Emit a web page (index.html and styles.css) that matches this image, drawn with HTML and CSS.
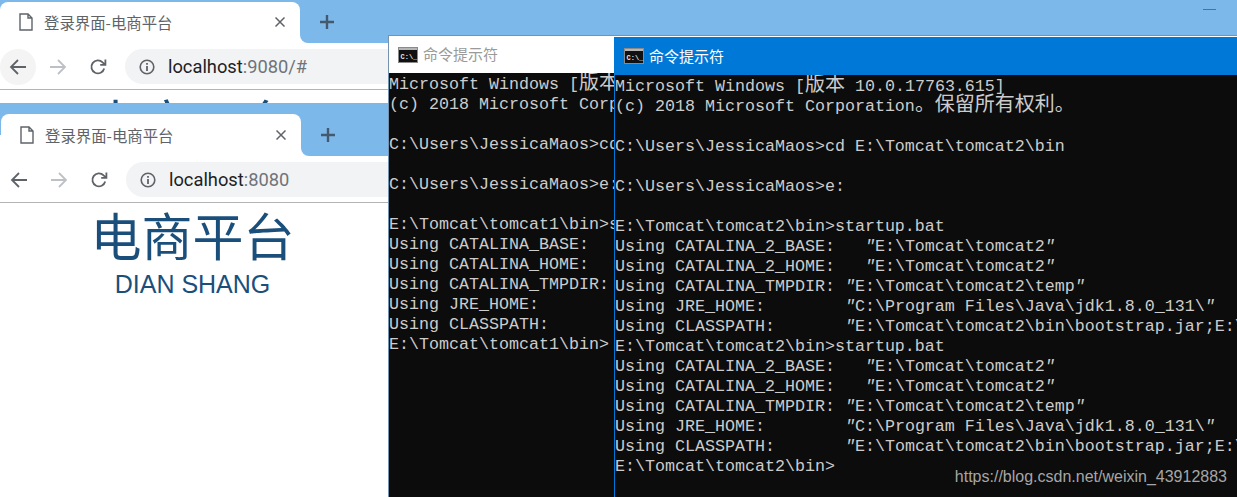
FILE: index.html
```html
<!DOCTYPE html>
<html lang="zh">
<head>
<meta charset="utf-8">
<title>命令提示符</title>
<link rel="stylesheet" href="styles.css">
</head>
<body>
<div class="desktop">
  <section class="browser browser-back">
    <div class="strip">
      <div class="tab">
        <svg class="doc" viewBox="0 0 14 18"><path d="M1 1h8l4 4v12H1z M9 1v4h4" fill="none" stroke="#5f6368" stroke-width="1.4"/></svg>
        <span class="tab-title">登录界面-电商平台</span>
        <svg class="close" viewBox="0 0 10 10"><path d="M0.5 0.5l9 9M9.5 0.5l-9 9" stroke="#5f6368" stroke-width="1.5"/></svg>
      </div>
      <div class="newtab">
        <svg class="plus" viewBox="0 0 14 14"><path d="M7 0v14M0 7h14" stroke="#45596e" stroke-width="2.4"/></svg>
      </div>
    </div>
    <div class="toolbar">
      <span class="nav nav-hover"><svg viewBox="0 0 18 18"><path d="M17 9H2M9 2L2 9l7 7" fill="none" stroke="#5f6368" stroke-width="1.8"/></svg></span>
      <span class="nav"><svg viewBox="0 0 18 18"><path d="M1 9h15M9 2l7 7-7 7" fill="none" stroke="#bdc1c6" stroke-width="1.8"/></svg></span>
      <span class="nav"><svg viewBox="0 0 18 18"><path d="M15.2 10.5A6.5 6.5 0 1 1 13.6 4.4L16 6.6M16.4 1.6v5.2h-5.2" fill="none" stroke="#5f6368" stroke-width="1.8"/></svg></span>
      <div class="omnibox">
        <svg class="info" viewBox="0 0 16 16"><circle cx="8" cy="8" r="6.8" fill="none" stroke="#5f6368" stroke-width="1.6"/><path d="M8 7v5M8 4v1.8" stroke="#5f6368" stroke-width="1.8"/></svg>
        <span class="url">localhost<span class="url-rest">:9080/#</span></span>
      </div>
    </div>
    <div class="page page-clipped">
      <h1 class="brand">电商平台</h1>
    </div>
  </section>

  <section class="browser browser-front">
    <div class="strip">
      <div class="tab">
        <svg class="doc" viewBox="0 0 14 18"><path d="M1 1h8l4 4v12H1z M9 1v4h4" fill="none" stroke="#5f6368" stroke-width="1.4"/></svg>
        <span class="tab-title">登录界面-电商平台</span>
        <svg class="close" viewBox="0 0 10 10"><path d="M0.5 0.5l9 9M9.5 0.5l-9 9" stroke="#5f6368" stroke-width="1.5"/></svg>
      </div>
      <div class="newtab">
        <svg class="plus" viewBox="0 0 14 14"><path d="M7 0v14M0 7h14" stroke="#45596e" stroke-width="2.4"/></svg>
      </div>
    </div>
    <div class="toolbar">
      <span class="nav"><svg viewBox="0 0 18 18"><path d="M17 9H2M9 2L2 9l7 7" fill="none" stroke="#5f6368" stroke-width="1.8"/></svg></span>
      <span class="nav"><svg viewBox="0 0 18 18"><path d="M1 9h15M9 2l7 7-7 7" fill="none" stroke="#bdc1c6" stroke-width="1.8"/></svg></span>
      <span class="nav"><svg viewBox="0 0 18 18"><path d="M15.2 10.5A6.5 6.5 0 1 1 13.6 4.4L16 6.6M16.4 1.6v5.2h-5.2" fill="none" stroke="#5f6368" stroke-width="1.8"/></svg></span>
      <div class="omnibox">
        <svg class="info" viewBox="0 0 16 16"><circle cx="8" cy="8" r="6.8" fill="none" stroke="#5f6368" stroke-width="1.6"/><path d="M8 7v5M8 4v1.8" stroke="#5f6368" stroke-width="1.8"/></svg>
        <span class="url">localhost<span class="url-rest">:8080</span></span>
      </div>
    </div>
    <div class="page">
      <h1 class="brand">电商平台</h1>
      <p class="brand-sub">DIAN SHANG</p>
    </div>
  </section>

  <div class="minimize"></div>

  <section class="console console-back">
    <header class="console-title">
      <svg class="cmd-icon" viewBox="0 0 20 16"><rect x="0.5" y="0.5" width="19" height="15" fill="#111" stroke="#8a8a8a"/><rect x="1" y="1" width="18" height="2" fill="#b5b5b5"/><text x="2.5" y="12" class="cmd-glyph">C:\_</text></svg>
      <span class="console-label">命令提示符</span>
    </header>
<pre class="console-body">Microsoft Windows [<span class="cjk">版本</span> 10.0.17763.615]
(c) 2018 Microsoft Corporation

C:\Users\JessicaMaos&gt;cd E:\Tomcat\tomcat1\bin

C:\Users\JessicaMaos&gt;e:

E:\Tomcat\tomcat1\bin&gt;startup.bat
Using CATALINA_BASE:
Using CATALINA_HOME:
Using CATALINA_TMPDIR:
Using JRE_HOME:
Using CLASSPATH:
E:\Tomcat\tomcat1\bin&gt;</pre>
  </section>

  <section class="console console-front">
    <header class="console-title">
      <svg class="cmd-icon" viewBox="0 0 20 16"><rect x="0.5" y="0.5" width="19" height="15" fill="#111" stroke="#8a8a8a"/><rect x="1" y="1" width="18" height="2" fill="#b5b5b5"/><text x="2.5" y="12" class="cmd-glyph">C:\_</text></svg>
      <span class="console-label">命令提示符</span>
    </header>
<pre class="console-body">Microsoft Windows [<span class="cjk">版本</span> 10.0.17763.615]
(c) 2018 Microsoft Corporation<span class="cjk">。保留所有权利。</span>

C:\Users\JessicaMaos&gt;cd E:\Tomcat\tomcat2\bin

C:\Users\JessicaMaos&gt;e:

E:\Tomcat\tomcat2\bin&gt;startup.bat
Using CATALINA_2_BASE:   <i>"</i>E:\Tomcat\tomcat2<i>"</i>
Using CATALINA_2_HOME:   <i>"</i>E:\Tomcat\tomcat2<i>"</i>
Using CATALINA_TMPDIR: <i>"</i>E:\Tomcat\tomcat2\temp<i>"</i>
Using JRE_HOME:        <i>"</i>C:\Program Files\Java\jdk1.8.0_131\<i>"</i>
Using CLASSPATH:       <i>"</i>E:\Tomcat\tomcat2\bin\bootstrap.jar;E:\Tomcat
E:\Tomcat\tomcat2\bin&gt;startup.bat
Using CATALINA_2_BASE:   <i>"</i>E:\Tomcat\tomcat2<i>"</i>
Using CATALINA_2_HOME:   <i>"</i>E:\Tomcat\tomcat2<i>"</i>
Using CATALINA_TMPDIR: <i>"</i>E:\Tomcat\tomcat2\temp<i>"</i>
Using JRE_HOME:        <i>"</i>C:\Program Files\Java\jdk1.8.0_131\<i>"</i>
Using CLASSPATH:       <i>"</i>E:\Tomcat\tomcat2\bin\bootstrap.jar;E:\Tomcat
E:\Tomcat\tomcat2\bin&gt;</pre>
  </section>

  <div class="watermark">https://blog.csdn.net/weixin_43912883</div>
</div>
</body>
</html>
```
FILE: styles.css
```css
* { box-sizing: border-box; }
html, body { margin: 0; padding: 0; background: #7db8ea; }
.desktop {
  position: relative;
  width: 1237px;
  height: 497px;
  overflow: hidden;
  background: #7db8ea;
  font-family: "Noto Sans CJK SC", "Liberation Sans", sans-serif;
}

/* browser windows */
.browser { position: absolute; left: 0; width: 1237px; background: #fff; }
.browser-back { top: 0; height: 103px; padding-top: 2px; overflow: hidden; background: #7db8ea; }
.browser-front { top: 103px; height: 394px; padding-top: 11px; background: #7db8ea; }
.strip {
  display: flex;
  height: 41px;
  background: linear-gradient(#7db8ea 50%, #fff 50%);
}
.browser-front .strip { padding-left: 1px; height: 42px; }
.tab {
  width: 300px;
  display: flex;
  align-items: center;
  padding: 0 15px 1px 19px;
  background: #fff;
  border-radius: 8px 8px 0 0;
}
.doc { width: 14px; height: 18px; flex: none; }
.tab-title { margin-left: 11px; flex: 1; font-size: 15.4px; line-height: 20px; color: #5f6368; white-space: nowrap; }
.close { width: 10px; height: 10px; flex: none; }
.newtab {
  flex: 1;
  display: flex;
  align-items: center;
  padding: 0 0 1px 20px;
  background: #7db8ea;
  border-bottom-left-radius: 8px;
}
.plus { width: 14px; height: 14px; }

.toolbar {
  display: flex;
  align-items: center;
  height: 47px;
  background: #fff;
  border-bottom: 1px solid #b4b4b4;
  padding-top: 1px;
}
.nav {
  width: 36px;
  height: 36px;
  margin-right: 4px;
  display: flex;
  align-items: center;
  justify-content: center;
  border-radius: 50%;
  flex: none;
}
.browser-front .nav { margin-left: 1px; margin-right: 3px; }
.nav svg { width: 18px; height: 18px; }
.nav-hover { background: #f4f4f4; }
.omnibox {
  flex: 1;
  height: 35px;
  margin-left: 5px;
  display: flex;
  align-items: center;
  padding-left: 14px;
  background: #f1f3f4;
  border-radius: 18px;
}
.browser-front .omnibox { margin-left: 6px; }
.info { width: 16px; height: 16px; flex: none; }
.url { margin-left: 13px; font-family: Roboto, "Liberation Sans", sans-serif; font-size: 18.3px; color: #202124; }
.url-rest { color: #6f7479; }

.page { background: #fff; text-align: center; color: #1a4f7c; }
.browser-back .page { height: 13px; overflow: hidden; }
.browser-front .page { height: 294px; }
.brand {
  margin: 0;
  padding-top: 1px;
  width: 385px;
  font-size: 51px;
  line-height: 60px;
  font-weight: 400;
  font-family: "Noto Sans CJK SC", sans-serif;
}
.brand-sub {
  margin: 6px 0 0;
  width: 385px;
  font-family: "Liberation Sans", sans-serif;
  font-size: 25px;
  line-height: 28px;
}

.minimize { position: absolute; left: 1203px; top: 9px; width: 13px; height: 1px; background: #4a7399; }

/* consoles */
.console { position: absolute; display: flex; flex-direction: column; }
.console-back {
  left: 388px; top: 35px; width: 849px; height: 462px;
  border-top: 1px solid #7593ae;
  border-left: 1px solid #7593ae;
  background: #0c0c0c;
}
.console-front {
  left: 614px; top: 37px; width: 623px; height: 460px;
  border-left: 1px solid #0078d7;
  background: #0c0c0c;
}
.console-title {
  display: flex;
  align-items: center;
  flex: none;
  height: 37px;
  padding-left: 9px;
  gap: 5px;
  font-size: 15px;
  background: #fff;
  color: #9a9a9a;
}
.console-front .console-title { height: 38px; background: #0078d7; color: #fff; }
.console-label { margin-top: -2px; }
.cmd-icon { width: 20px; height: 16px; flex: none; }
.cmd-glyph { font-family: "Liberation Mono", monospace; font-size: 7px; font-weight: 700; fill: #e6e6e6; }
.console-body {
  margin: 0;
  padding-top: 2px;
  overflow: hidden;
  color: #cccccc;
  font-family: "Liberation Mono", "Noto Sans CJK SC", monospace;
  font-size: 16.67px;
  line-height: 20px;
  white-space: pre;
}
.cjk { font-family: "Noto Sans CJK SC", sans-serif; font-size: 20px; line-height: 0; }

.watermark {
  position: absolute;
  right: 10px;
  top: 468px;
  font-family: "Liberation Sans", sans-serif;
  font-size: 16px;
  line-height: 18px;
  color: #a6a6a6;
}
```
